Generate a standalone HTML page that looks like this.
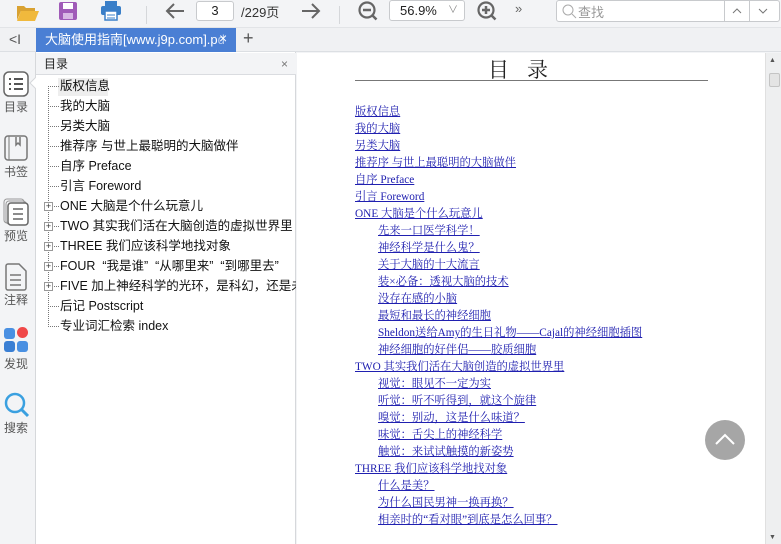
<!DOCTYPE html>
<html><head><meta charset="utf-8"><style>
*{margin:0;padding:0;box-sizing:border-box}
body{width:781px;height:544px;overflow:hidden;background:#f3f4f6;font-family:"Liberation Sans","Noto Sans CJK SC",sans-serif;position:relative;color:#222}
.abs{position:absolute}
.tb{left:0;top:0;width:781px;height:28px;background:#f3f4f6;border-bottom:1px solid #e2e4e7}
.tabbar{left:0;top:28px;width:781px;height:24px;background:#f0f1f3;border-bottom:1px solid #dcdfe3}
.tab{left:36px;top:28px;width:200px;height:24px;background:#4a7fd4;color:#fff;font-size:13px;line-height:24px;padding-left:9px;white-space:nowrap;overflow:hidden}
.rail{left:0;top:52px;width:36px;height:492px;background:#f3f4f6;border-right:1px solid #d6d8db}
.panel{left:36px;top:52px;width:260px;height:492px;background:#fff;border-right:1px solid #d6d8db}
.phead{left:36px;top:53px;width:260px;height:22px;background:#f3f4f6;border-bottom:1px solid #dadce0;font-size:12px;line-height:22px;padding-left:8px}
.oi{position:absolute;left:60px;font-size:12.5px;white-space:nowrap;line-height:16px;color:#111}
.dot{position:absolute;border-top:1px dotted #777;width:9px;left:50px}
.plus{position:absolute;left:44px;width:9px;height:9px;border:1px solid #999;background:#fff;font-size:9px;line-height:7px;text-align:center;color:#333}
.page{left:297px;top:53px;width:468px;height:491px;background:#fff}
.sb{left:765px;top:53px;width:16px;height:491px;background:#eeeff0;border-left:1px solid #e0e0e0}
.l{position:absolute;font-family:"Liberation Serif","Noto Serif CJK SC",serif;font-size:11.3px;color:#2020b0;text-decoration:underline;white-space:nowrap;line-height:14px}
.sep{top:6px;width:1px;height:18px;background:#d5d7da}
</style></head><body>
<div class="abs tb"></div>
<svg class="abs" style="left:16px;top:2px" width="24" height="20" viewBox="0 0 24 20"><path d="M1 4h7l2 2h9v3H5L1 18z" fill="#d9a232"/><path d="M5 9h18l-4 10H1z" fill="#f0b93d"/></svg>
<svg class="abs" style="left:58px;top:1px" width="20" height="20" viewBox="0 0 20 20"><rect x="1" y="1" width="18" height="18" rx="2" fill="#a05bb8"/><rect x="5" y="2" width="10" height="6" fill="#fff"/><rect x="5" y="12" width="10" height="6" fill="#d8b8e4"/></svg>
<svg class="abs" style="left:100px;top:1px" width="22" height="20" viewBox="0 0 22 20"><rect x="5" y="0" width="12" height="5" fill="#3a7fc8"/><rect x="1" y="5" width="20" height="9" rx="2" fill="#3a7fc8"/><rect x="5" y="10" width="12" height="9" fill="#fff" stroke="#3a7fc8" stroke-width="1.5"/><path d="M7 14h8M7 17h8" stroke="#3a7fc8"/></svg>
<div class="abs sep" style="left:146px"></div>
<svg class="abs" style="left:164px;top:2px" width="22" height="18"><path d="M20 9H3M10 2L3 9l7 7" stroke="#666" stroke-width="2" fill="none"/></svg>
<div class="abs" style="left:196px;top:1px;width:38px;height:20px;background:#fff;border:1px solid #c8cacd;border-radius:3px;font-size:13px;text-align:center;line-height:18px">3</div>
<div class="abs" style="left:241px;top:2px;font-size:13px;color:#333">/229页</div>
<svg class="abs" style="left:300px;top:2px" width="22" height="18"><path d="M2 9h17M12 2l7 7-7 7" stroke="#666" stroke-width="2" fill="none"/></svg>
<div class="abs sep" style="left:339px"></div>
<svg class="abs" style="left:357px;top:0" width="22" height="22"><circle cx="10" cy="10" r="7.5" stroke="#666" stroke-width="2.2" fill="none"/><path d="M6 10h8M15.5 15.5l4 4" stroke="#666" stroke-width="2.5"/></svg>
<div class="abs" style="left:389px;top:0;width:76px;height:21px;background:#fff;border:1px solid #c8cacd;border-radius:3px;font-size:13px;line-height:19px;padding-left:10px">56.9%<span style="position:absolute;right:6px;top:0;color:#888;font-size:10px">&#8744;</span></div>
<svg class="abs" style="left:476px;top:0" width="22" height="22"><circle cx="10" cy="10" r="7.5" stroke="#666" stroke-width="2.2" fill="none"/><path d="M6 10h8M10 6v8M15.5 15.5l4 4" stroke="#666" stroke-width="2.5"/></svg>
<div class="abs" style="left:515px;top:1px;font-size:13px;color:#666">»</div>
<div class="abs" style="left:556px;top:0;width:224px;height:22px;background:#fff;border:1px solid #c8cacd;border-radius:3px"></div>
<svg class="abs" style="left:561px;top:3px" width="16" height="16"><circle cx="7" cy="7" r="5" stroke="#aaa" fill="none"/><path d="M11 11l4 4" stroke="#aaa"/></svg>
<div class="abs" style="left:578px;top:2px;font-size:13px;color:#999">查找</div>
<div class="abs" style="left:724px;top:0;width:1px;height:22px;background:#c8cacd"></div>
<div class="abs" style="left:749px;top:0;width:1px;height:22px;background:#c8cacd"></div>
<svg class="abs" style="left:731px;top:6px" width="12" height="10"><path d="M2 7l4-4 4 4" stroke="#777" fill="none"/></svg>
<svg class="abs" style="left:757px;top:6px" width="12" height="10"><path d="M2 3l4 4 4-4" stroke="#777" fill="none"/></svg>

<div class="abs tabbar"></div>
<div class="abs" style="left:9px;top:31px;font-size:14px;color:#555">&lt;I</div>
<div class="abs tab">大脑使用指南[www.j9p.com].p<span style="opacity:.6">d</span></div>
<div class="abs" style="left:219px;top:30px;color:#fff;font-size:14px">×</div>
<div class="abs" style="left:243px;top:28px;font-size:18px;color:#555">+</div>

<div class="abs rail"></div>
<svg class="abs" style="left:3px;top:71px" width="26" height="26"><rect x="1" y="1" width="24" height="24" rx="5" stroke="#666" stroke-width="1.5" fill="#fff"/><path d="M6 8h2M11 8h9M6 13h2M11 13h9M6 18h2M11 18h9" stroke="#555" stroke-width="2"/></svg>
<svg class="abs" style="left:29px;top:76px" width="8" height="14"><path d="M8 0L1 7l7 7" fill="#fff" stroke="#d6d8db"/></svg>
<div class="abs" style="top:98px;left:0;width:32px;text-align:center;font-size:12px;color:#555">目录</div>
<svg class="abs" style="left:4px;top:135px" width="24" height="26"><rect x="1" y="1" width="22" height="24" rx="3" stroke="#777" stroke-width="1.5" fill="none"/><path d="M5 1v24" stroke="#777"/><path d="M12 2v8l2-2 2 2V2" stroke="#777" fill="none" stroke-width="1.5"/></svg>
<div class="abs" style="top:163px;left:0;width:32px;text-align:center;font-size:12px;color:#555">书签</div>
<svg class="abs" style="left:3px;top:198px" width="26" height="28"><rect x="1" y="1" width="20" height="24" rx="3" stroke="#999" fill="none"/><rect x="3" y="3" width="20" height="23" rx="3" stroke="#999" fill="none"/><rect x="5" y="5" width="20" height="22" rx="3" stroke="#666" stroke-width="1.5" fill="#fff"/><path d="M10 11h10M10 16h10M10 21h10" stroke="#666" stroke-width="1.5"/></svg>
<div class="abs" style="top:227px;left:0;width:32px;text-align:center;font-size:12px;color:#555">预览</div>
<svg class="abs" style="left:5px;top:263px" width="22" height="28"><path d="M1 3a2 2 0 0 1 2-2h11l7 7v17a2 2 0 0 1-2 2H3a2 2 0 0 1-2-2z" stroke="#777" stroke-width="1.5" fill="none"/><path d="M5 12h11M5 17h11M5 22h11" stroke="#777" stroke-width="1.5"/></svg>
<div class="abs" style="top:291px;left:0;width:32px;text-align:center;font-size:12px;color:#555">注释</div>
<div class="abs" style="left:4px;top:328px;width:11px;height:11px;border-radius:3px;background:#4a90e2"></div>
<div class="abs" style="left:17px;top:327px;width:11px;height:11px;border-radius:50%;background:#f04848"></div>
<div class="abs" style="left:4px;top:341px;width:11px;height:11px;border-radius:3px;background:#3a7fd4"></div>
<div class="abs" style="left:17px;top:341px;width:11px;height:11px;border-radius:3px;background:#4a90e2"></div>
<div class="abs" style="top:355px;left:0;width:32px;text-align:center;font-size:12px;color:#555">发现</div>
<svg class="abs" style="left:3px;top:392px" width="28" height="28"><circle cx="12" cy="11" r="9" stroke="#3aa0e0" stroke-width="2.5" fill="none"/><path d="M19 18l6 6" stroke="#3aa0e0" stroke-width="3"/></svg>
<div class="abs" style="top:419px;left:0;width:32px;text-align:center;font-size:12px;color:#555">搜索</div>

<div class="abs panel"></div>
<div class="abs phead">目录<span style="position:absolute;right:8px;color:#777">×</span></div>
<div class="abs" style="left:48px;top:86px;height:241px;border-left:1px dotted #777"></div>
<div class="abs" style="left:58px;top:78px;width:50px;height:18px;background:#eee"></div>
<div style="position:absolute;left:0;top:0">
<div class="dot" style="top:86px"></div><div class="oi" style="top:78px">版权信息</div>
<div class="dot" style="top:106px"></div><div class="oi" style="top:98px">我的大脑</div>
<div class="dot" style="top:126px"></div><div class="oi" style="top:118px">另类大脑</div>
<div class="dot" style="top:146px"></div><div class="oi" style="top:138px">推荐序 与世上最聪明的大脑做伴</div>
<div class="dot" style="top:166px"></div><div class="oi" style="top:158px">自序 Preface</div>
<div class="dot" style="top:186px"></div><div class="oi" style="top:178px">引言 Foreword</div>
<div class="dot" style="top:206px"></div><div class="plus" style="top:202px">+</div><div class="oi" style="top:198px">ONE 大脑是个什么玩意儿</div>
<div class="dot" style="top:226px"></div><div class="plus" style="top:222px">+</div><div class="oi" style="top:218px">TWO 其实我们活在大脑创造的虚拟世界里</div>
<div class="dot" style="top:246px"></div><div class="plus" style="top:242px">+</div><div class="oi" style="top:238px">THREE 我们应该科学地找对象</div>
<div class="dot" style="top:266px"></div><div class="plus" style="top:262px">+</div><div class="oi" style="top:258px;width:236px;overflow:hidden">FOUR &nbsp;“我是谁” &nbsp;“从哪里来” &nbsp;“到哪里去”</div>
<div class="dot" style="top:286px"></div><div class="plus" style="top:282px">+</div><div class="oi" style="top:278px;width:236px;overflow:hidden">FIVE 加上神经科学的光环，是科幻，还是未来</div>
<div class="dot" style="top:306px"></div><div class="oi" style="top:298px">后记 Postscript</div>
<div class="dot" style="top:326px"></div><div class="oi" style="top:318px">专业词汇检索 index</div>
</div>

<div class="abs page"></div>
<div class="abs" style="left:488px;top:54px;font-family:'Noto Serif CJK SC',serif;font-size:21px;color:#222;letter-spacing:18px">目录</div>
<div class="abs" style="left:355px;top:80px;width:353px;height:1px;background:#777"></div>
<div class="l" style="left:355px;top:105px">版权信息</div>
<div class="l" style="left:355px;top:122px">我的大脑</div>
<div class="l" style="left:355px;top:139px">另类大脑</div>
<div class="l" style="left:355px;top:156px">推荐序 与世上最聪明的大脑做伴</div>
<div class="l" style="left:355px;top:173px">自序 Preface</div>
<div class="l" style="left:355px;top:190px">引言 Foreword</div>
<div class="l" style="left:355px;top:207px">ONE 大脑是个什么玩意儿</div>
<div class="l" style="left:378px;top:224px">先来一口医学科学！</div>
<div class="l" style="left:378px;top:241px">神经科学是什么鬼？</div>
<div class="l" style="left:378px;top:258px">关于大脑的十大流言</div>
<div class="l" style="left:378px;top:275px">装×必备：透视大脑的技术</div>
<div class="l" style="left:378px;top:292px">没存在感的小脑</div>
<div class="l" style="left:378px;top:309px">最短和最长的神经细胞</div>
<div class="l" style="left:378px;top:326px">Sheldon送给Amy的生日礼物——Cajal的神经细胞插图</div>
<div class="l" style="left:378px;top:343px">神经细胞的好伴侣——胶质细胞</div>
<div class="l" style="left:355px;top:360px">TWO 其实我们活在大脑创造的虚拟世界里</div>
<div class="l" style="left:378px;top:377px">视觉：眼见不一定为实</div>
<div class="l" style="left:378px;top:394px">听觉：听不听得到，就这个旋律</div>
<div class="l" style="left:378px;top:411px">嗅觉：别动，这是什么味道？</div>
<div class="l" style="left:378px;top:428px">味觉：舌尖上的神经科学</div>
<div class="l" style="left:378px;top:445px">触觉：来试试触摸的新姿势</div>
<div class="l" style="left:355px;top:462px">THREE 我们应该科学地找对象</div>
<div class="l" style="left:378px;top:479px">什么是美？</div>
<div class="l" style="left:378px;top:496px">为什么国民男神一换再换？</div>
<div class="l" style="left:378px;top:513px">相亲时的“看对眼”到底是怎么回事？</div>

<div class="abs" style="left:705px;top:420px;width:40px;height:40px;border-radius:50%;background:#a6a6a6"></div>
<svg class="abs" style="left:713px;top:430px" width="24" height="20"><path d="M3 14l9-9 9 9" stroke="#fff" stroke-width="2" fill="none"/></svg>

<div class="abs sb"></div>
<div class="abs" style="left:769px;top:57px;font-size:7px;color:#555">▲</div>
<div class="abs" style="left:769px;top:73px;width:11px;height:14px;background:#e4e4e4;border:1px solid #c4c4c4;border-radius:2px"></div>
<div class="abs" style="left:769px;top:534px;font-size:7px;color:#555">▼</div>
</body></html>
